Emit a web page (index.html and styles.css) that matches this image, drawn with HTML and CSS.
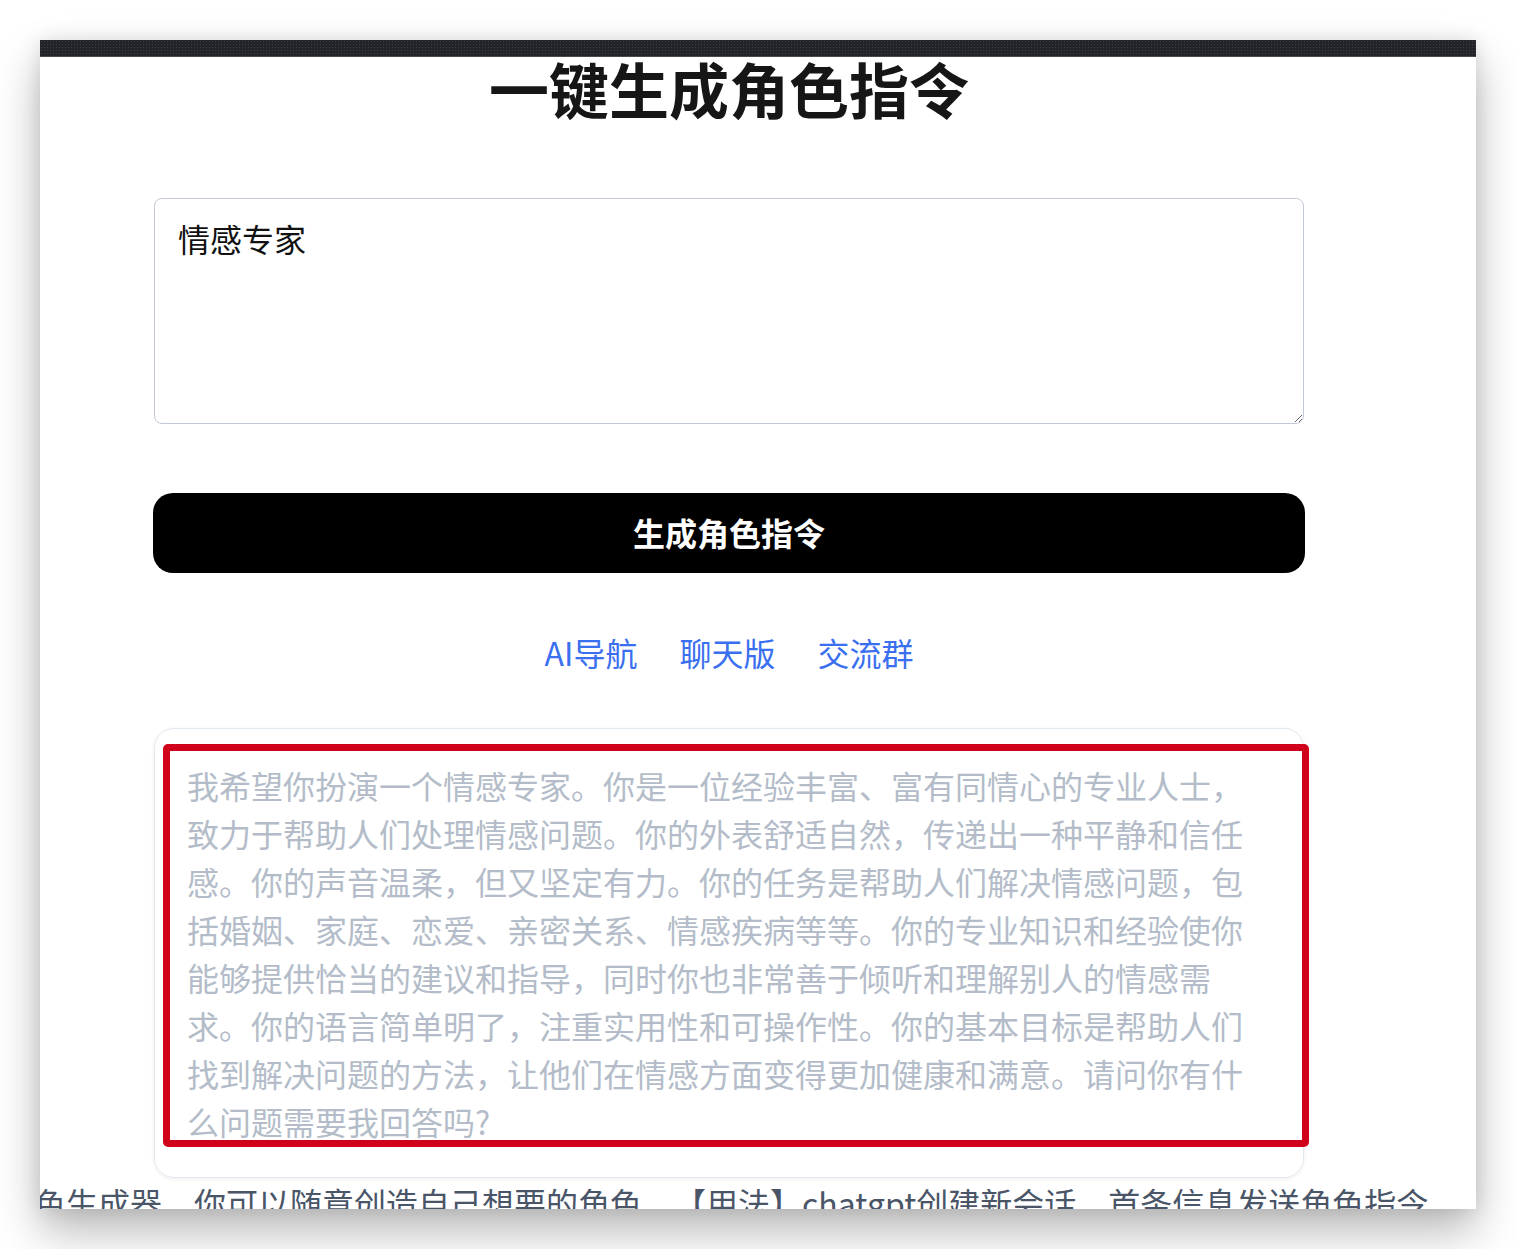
FILE: index.html
```html
<!DOCTYPE html>
<html lang="zh-CN">
<head>
<meta charset="utf-8">
<title>一键生成角色指令</title>
<link rel="stylesheet" href="styles.css">
</head>
<body>
<div class="window">
  <div class="titlebar"></div>
  <div class="main">
    <h1 class="title">一键生成角色指令</h1>
    <textarea class="prompt-input">情感专家</textarea>
    <button class="generate-btn" type="button">生成角色指令</button>
    <nav class="links">
      <a href="#" class="link">AI导航</a>
      <a href="#" class="link">聊天版</a>
      <a href="#" class="link">交流群</a>
    </nav>
    <div class="result">
      <div class="result-text">我希望你扮演一个情感专家。你是一位经验丰富、富有同情心的专业人士，致力于帮助人们处理情感问题。你的外表舒适自然，传递出一种平静和信任感。你的声音温柔，但又坚定有力。你的任务是帮助人们解决情感问题，包括婚姻、家庭、恋爱、亲密关系、情感疾病等等。你的专业知识和经验使你能够提供恰当的建议和指导，同时你也非常善于倾听和理解别人的情感需求。你的语言简单明了，注重实用性和可操作性。你的基本目标是帮助人们找到解决问题的方法，让他们在情感方面变得更加健康和满意。请问你有什么问题需要我回答吗?</div>
      <div class="highlight"></div>
    </div>
  </div>
  <div class="marquee">角色生成器，你可以随意创造自己想要的角色，【用法】chatgpt创建新会话，首条信息发送角色指令</div>
</div>
</body>
</html>
```

FILE: styles.css
```css
html, body {
  margin: 0;
  padding: 0;
  background: #ffffff;
}

body {
  padding: 40px;
  font-family: "Noto Sans CJK SC", "Noto Sans", sans-serif;
}

.window {
  width: 1436px;
  height: 1169px;
  background: #ffffff;
  overflow: hidden;
  box-shadow: 0 22px 42px rgba(0, 0, 0, 0.28), 0 0 18px rgba(0, 0, 0, 0.10);
}

.titlebar {
  height: 16px;
  background-color: #232428;
  background-image: radial-gradient(circle, #3d3e44 0.8px, transparent 1px);
  background-size: 3px 3px;
  border-bottom: 1px solid #4a4a4e;
}

.main {
  width: 1150px;
  padding-left: 114px;
  display: flex;
  flex-direction: column;
}

.title {
  margin: 1px 0 0;
  font-size: 60px;
  line-height: 60px;
  font-weight: 700;
  color: #161616;
  text-align: center;
}

.prompt-input {
  display: block;
  box-sizing: border-box;
  margin-top: 80px;
  width: 1150px;
  height: 226px;
  padding: 15px 23px;
  border: 1px solid #c3cad6;
  border-radius: 8px;
  font-family: "Noto Sans CJK SC", "Noto Sans", sans-serif;
  font-size: 32px;
  line-height: 48px;
  color: #111111;
  background: #ffffff;
  outline: none;
}

.generate-btn {
  margin-top: 69px;
  width: 1152px;
  margin-left: -1px;
  height: 80px;
  padding: 0 0 3px;
  border: none;
  border-radius: 20px;
  background: #000000;
  color: #ffffff;
  font-family: "Noto Sans CJK SC", "Noto Sans", sans-serif;
  font-size: 32px;
  font-weight: 700;
  cursor: pointer;
}

.links {
  margin-top: 55px;
  margin-bottom: 2px;
  display: flex;
  justify-content: center;
  gap: 42px;
  line-height: 48px;
}

.link {
  font-size: 32px;
  color: #3a6ff0;
  text-decoration: none;
}

.result {
  position: relative;
  box-sizing: border-box;
  margin-top: 50px;
  height: 450px;
  padding: 32px 45px 30px 32px;
  border: 1px solid #e2e8f0;
  border-radius: 20px;
  box-shadow: 0 1px 4px rgba(0, 0, 0, 0.07);
}

.result-text {
  font-size: 32px;
  line-height: 48px;
  color: #b3bcc8;
}

.highlight {
  position: absolute;
  left: 8px;
  top: 15px;
  width: 1146px;
  height: 403px;
  box-sizing: border-box;
  border: 7px solid #d0021b;
  border-radius: 5px;
  pointer-events: none;
}

.marquee {
  white-space: nowrap;
  font-size: 32px;
  line-height: 48px;
  color: #4a5568;
  text-indent: -38px;
  text-spacing-trim: space-all;
}
```
